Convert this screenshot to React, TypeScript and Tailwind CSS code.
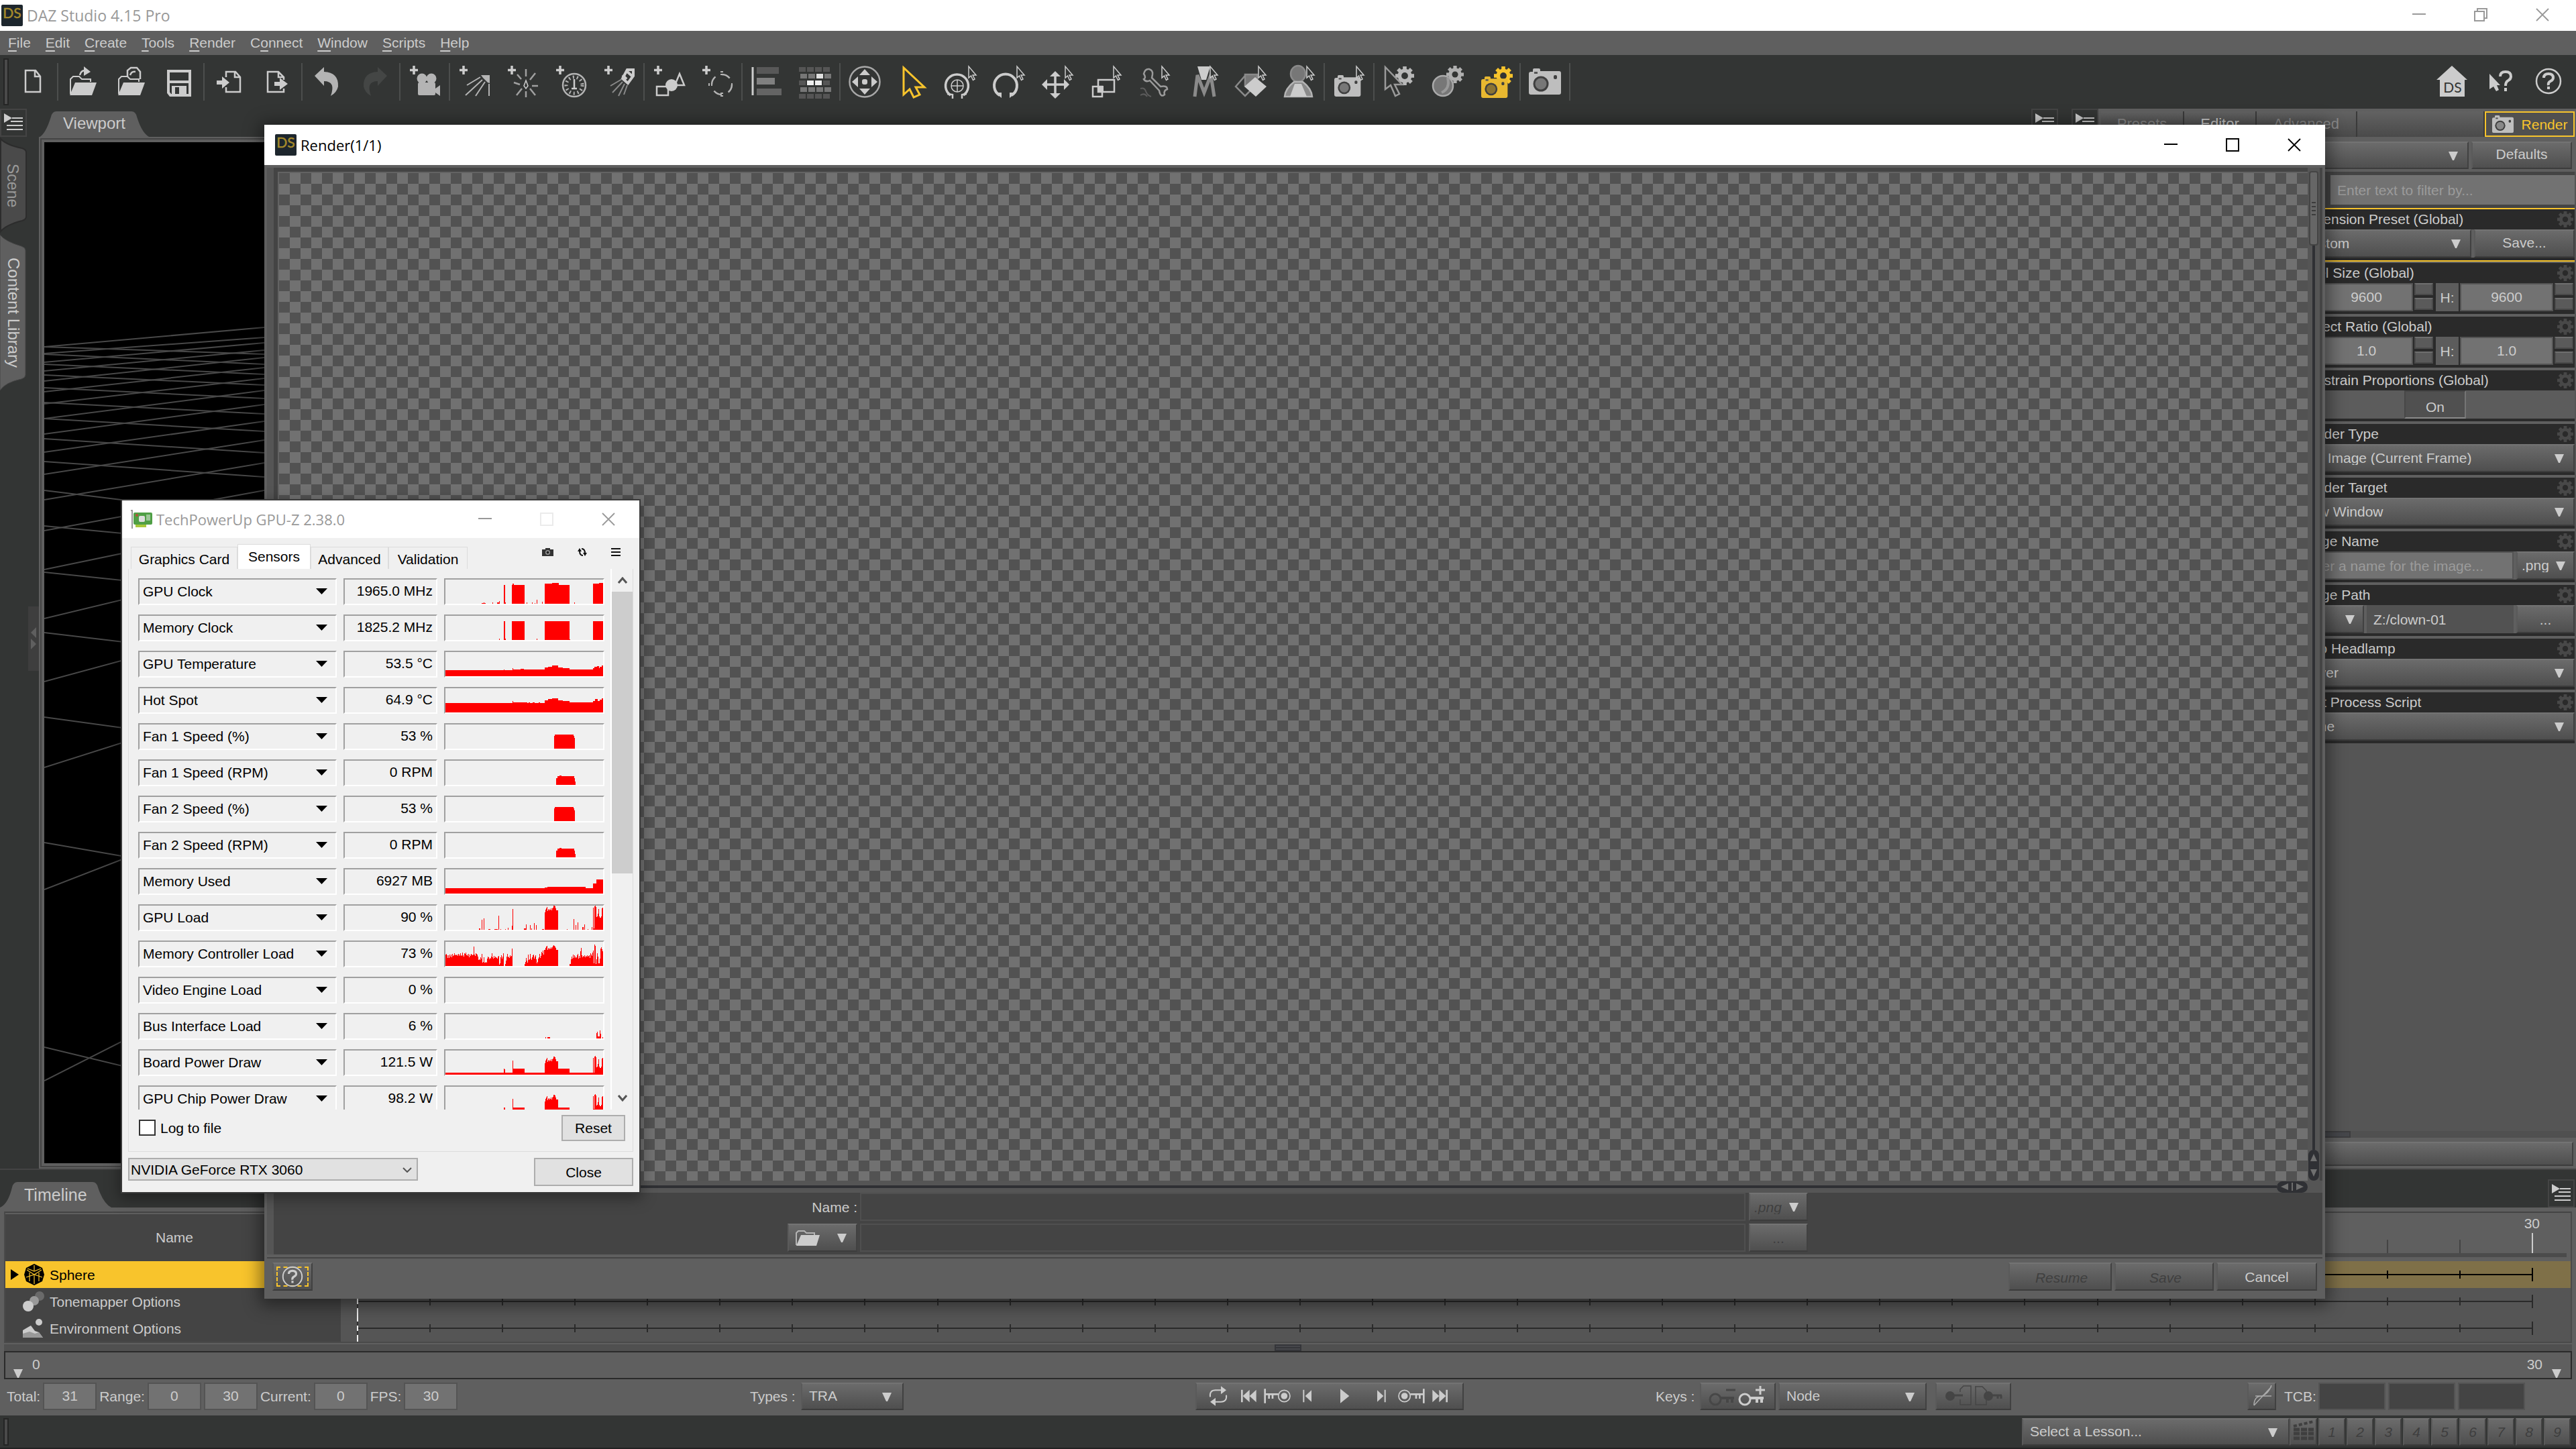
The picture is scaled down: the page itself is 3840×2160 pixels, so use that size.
import type { ReactNode } from "react";

const btn = "border-2 border-t-[#737373] border-l-[#5a5a5a] border-r-[#414141] border-b-[#3c3c3c] bg-linear-to-b from-[#6b6b6b] to-[#4f4f4f]";
const field = "border-2 border-[#545454] bg-[#727272] text-center text-[#cccccc] outline-none";

// ---------- small drawing helpers ----------

function Icon({ children, size = 48 }: { children: ReactNode; size?: number }) {
  return (
    <svg width={size} height={size} viewBox="0 0 48 48" fill="none" stroke="#cccccc" strokeWidth="2.5" className="shrink-0 overflow-visible">
      {children}
    </svg>
  );
}

const Plus = () => <path d="M8 0v13M2 6.500h12" strokeWidth="3.500" />;
const MiniCursor = () => (
  <path d="M35 1v17l3.500-3 3 6.500 2.500-1.500-3-6h5z" fill="#333534" strokeWidth="1.500" />
);

function Gear({ x, y, r, color, hole }: { x: number; y: number; r: number; color: string; hole: string }) {
  return (
    <g stroke="none">
      <g fill={color}>
        {[0, 45, 90, 135].map((a) => (
          <rect key={a} x={x - r / 5} y={y - r} width={(r * 2) / 5} height={r * 2} transform={`rotate(${a} ${x} ${y})`} />
        ))}
        <circle cx={x} cy={y} r={r * 0.75} />
      </g>
      <circle cx={x} cy={y} r={r * 0.35} fill={hole} />
    </g>
  );
}

function Camera({ x, y, s, color, lens }: { x: number; y: number; s: number; color: string; lens: string }) {
  return (
    <g transform={`translate(${x} ${y}) scale(${s})`} stroke="none">
      <path d="M3 5h3V2q0-2 2-2h7q2 0 2 2v2h28q3 0 3 3v29q0 3-3 3H3q-3 0-3-3V8q0-3 3-3z" fill={color} />
      <circle cx="18" cy="23" r="11.500" fill="#3f3f3f" />
      <circle cx="18" cy="23" r="8.500" fill={lens} />
      <rect x="37" y="10" width="5" height="6" rx="2" fill="#3f3f3f" />
      <rect x="8" y="5" width="5" height="3" fill="#555" />
    </g>
  );
}

function Caret({ className = "" }: { className?: string }) {
  return (
    <svg width="14" height="13" viewBox="0 0 14 13" className={`pointer-events-none shrink-0 ${className}`}>
      <path d="M0 0h14L8 13H6z" fill="#cccccc" />
    </svg>
  );
}

function DsLogo() {
  return (
    <svg width="32" height="32" viewBox="0 0 32 32" className="shrink-0">
      <rect width="32" height="32" rx="2" fill="#1d262d" />
      <text x="16" y="20" textAnchor="middle" fontSize="21" fontFamily="Lato, sans-serif" fill="#a58a2b" stroke="#a58a2b" strokeWidth="0.500">DS</text>
    </svg>
  );
}

function PaneMenu({ label }: { label: string }) {
  return (
    <button aria-label={label} className="h-[42px] w-[40px] shrink-0 border-2 border-[#444] pl-1">
      <svg width="28" height="28" viewBox="0 0 28 28" fill="#cccccc">
        <path d="M0 0l12 7L0 14zM12 6h16v2H12zM10 11h18v2H10zM4 17h24v2H4zM4 23h24v2H4z" />
      </svg>
    </button>
  );
}

type Mark = "min" | "max" | "restore" | "close";

function WindowButton({ mark, label, color }: { mark: Mark; label: string; color: string }) {
  return (
    <button aria-label={label} className="flex h-full w-[92px] items-center justify-center">
      <svg width="20" height="20" viewBox="0 0 20 20" fill="none" stroke={color} strokeWidth="2">
        {mark === "min" && <path d="M0 9h20" />}
        {mark === "max" && <path d="M1 1h18v18H1z" />}
        {mark === "restore" && <path d="M1 5h14v14H1zM5 5V1h14v14h-4" />}
        {mark === "close" && <path d="M1 1l18 18M19 1L1 19" strokeWidth="1.800" />}
      </svg>
    </button>
  );
}

// ---------- menu and toolbar ----------

const MENU: [string, string, string][] = [
  ["", "F", "ile"], ["", "E", "dit"], ["", "C", "reate"], ["", "T", "ools"], ["", "R", "ender"],
  ["C", "o", "nnect"], ["", "W", "indow"], ["", "S", "cripts"], ["", "H", "elp"],
];

const folder = (
  <>
    <path d="M6 42V20l4-4h9l4 4h13v4" strokeWidth="2" />
    <path d="M13 25h32l-7 19H5z" fill="#cccccc" stroke="none" />
  </>
);

const TOOLS: [string, ReactNode][][] = [
  [["New", <path d="M13 7h15l7 9v23H13zM27 7v9h8" />]],
  [
    ["Open", <>{folder}<path d="M20 14q2-8 9-7" /><path d="M26 1l10 8-10 6z" fill="#cccccc" stroke="none" /></>],
    ["Merge", <>{folder}<path d="M19 16V7l5-4h9l5 6v11M23 14q2-6 8-5" /></>],
    ["Save", <><path d="M8 8h32v36H11l-3-4z" strokeWidth="4" /><path d="M8 24h32" strokeWidth="4" /><path d="M13 30h22v14H13z" fill="#cccccc" stroke="none" /><path d="M18 32h6v10h-6z" fill="#333534" stroke="none" /></>],
  ],
  [
    ["Import", <><path d="M20 17V9h14l7 8v22H20v-7M33 9v8h8" /><path d="M6 22h8v-6l11 9-11 9v-6H6z" fill="#cccccc" stroke="none" /></>],
    ["Export", <><path d="M34 34v5H10V9h16l8 8v4M26 9v8h8" /><path d="M20 24h8v-6l12 9-12 9v-6h-8z" fill="#cccccc" stroke="none" /></>],
  ],
  [
    ["Undo", <path d="M6 15L20 2v7q22 1 21 22-2 9-11 14 8-22-10-22v7z" fill="#b4b4b4" stroke="none" />],
    ["Redo", <path d="M42 15L28 2v7Q6 10 7 31q2 9 11 14-8-22 10-22v7z" fill="#444645" stroke="none" />],
  ],
  [["New Camera", <><Plus /><g fill="#b4b4b4" stroke="none"><circle cx="20" cy="19" r="7.500" /><circle cx="34" cy="19" r="7.500" /><rect x="14" y="25" width="26" height="19" rx="2" /><path d="M40 34l7-5v16l-7-5z" /></g></>]],
  [
    ["New Distant Light", <><Plus /><path d="M34 14h13v12l-3-1-7-7z" fill="#b4b4b4" stroke="none" /><path d="M33 17L13 29M36 21L11 44M40 24L26 45M46 27V45" strokeWidth="2" stroke="#b4b4b4" /></>],
    ["New Point Light", <><Plus /><path d="M29 22l-3 8 3 4 3-4z" strokeWidth="1.500" /><path d="M29 16V5M29 38v9M35 21l8-10M38 30h9M35 34l8 10M23 34l-8 10M20 28l-9-3M22 20l-6-7" stroke="#a0a0a0" /></>],
    ["New Linear Point Light", <><Plus /><circle cx="29" cy="29" r="17" stroke="#b4b4b4" /><circle cx="29" cy="29" r="12" strokeDasharray="2 4" stroke="#b4b4b4" strokeWidth="5" /><path d="M29 20v14M25 34h8" /></>],
    ["New Spotlight", <><Plus /><path d="M29 14l6 6M36 6l9 0v9l-8 11-8-7zM35 8l8 7" strokeWidth="4" /><path d="M28 20L11 30M29 24L14 40M32 27l-9 18M36 29l-5 14" stroke="#8a8a8a" strokeWidth="2" /></>],
  ],
  [
    ["New Primitive", <><Plus /><path d="M40 12l7 17H33z" /><circle cx="28" cy="29" r="9" fill="#cccccc" stroke="none" /><path d="M6 31h17v13H6z" /></>],
    ["New Null", <><Plus /><circle cx="31" cy="28" r="15" strokeDasharray="13 10.500" stroke="#b4b4b4" /><path d="M31 8v8M31 40v7M11 28h6M45 28h4" strokeWidth="4" stroke="#b4b4b4" strokeDasharray="2 2" /></>],
  ],
  [
    ["Align", <><path d="M3 2v42" strokeWidth="3" /><g stroke="none"><rect x="9" y="2" width="33" height="10" fill="#585858" /><rect x="9" y="18" width="27" height="10" fill="#808080" /><rect x="9" y="34" width="37" height="10" fill="#646464" /></g></>],
    ["Grid", <g stroke="none">{[0, 1, 2, 3, 4].map((r) => [0, 1, 2, 3].map((c) => (
      <rect key={`${r}${c}`} x={c * 12 + (r % 2) * 2} y={2 + r * 10} width="10" height="7" fill={r === 2 ? (c === 1 || c === 2 ? "#eeeeee" : "#555") : r === 1 && c === 2 ? "#e0e0e0" : r % 4 === 0 ? "#555" : "#777"} />
    )))}</g>],
  ],
  [
    ["Universal", <><circle cx="24" cy="24" r="22.500" stroke="#a8a8a8" /><g fill="#cccccc" stroke="none"><path d="M24 5l8 9H16zM24 43l8-9H16zM5 24l9-8v16zM43 24l-9-8v16z" /><rect x="20" y="20" width="8" height="8" rx="3" /></g></>],
    ["Node Selection", <path d="M10 3v40l9-8 6 12 9-4-6-11h13z" stroke="#f8c42c" strokeWidth="3" />],
    ["Universal Manipulator", <><g transform="translate(-6 2)"><path d="M14 42a17 17 0 1 1 19 0" strokeWidth="3.500" /><path d="M9 40l8 1v6M38 40l-7 1v6" /><circle cx="24" cy="28" r="9" strokeWidth="1.500" /><path d="M24 19v18M15 28h18" strokeWidth="1.500" /></g><MiniCursor /></>],
    ["Rotate", <><g transform="translate(-6 2)"><path d="M15 42a17 17 0 1 1 18 0" strokeWidth="4" /><path d="M8 38h10v8zM40 38H30v8z" fill="#cccccc" stroke="none" /></g><MiniCursor /></>],
    ["Translate", <><path d="M20 12v33M4 28h34" strokeWidth="3.500" /><path d="M20 8l8 8H12zM20 49l8-8H12zM0 28l8-8v16zM41 28l-8-8v16z" fill="#cccccc" stroke="none" /><MiniCursor /></>],
    ["Scale", <><path d="M12 21h24v18H12z" /><path d="M4 31h14v15H4z" /><path d="M12 30h8v9h-8z" fill="#cccccc" stroke="none" /><MiniCursor /></>],
    ["Joint Editor", <><path d="M8 12q2-8 8-7 6 2 5 8l-1 5 13 13q10-2 10 4-6 2-4 8-6 5-8-6L17 22q-6 3-9-2 4-2 0-8z" stroke="#9a9a9a" /><path d="M3 34q6-2 8 4t8 8M3 44q6-4 10 2" stroke="#5c5c5c" strokeWidth="2" /><MiniCursor /></>],
    ["Weight Brush", <><path d="M12 46l4-32 10 26 10-26 5 32" stroke="#8a8a8a" strokeWidth="5" /><path d="M16 1h19l-6 20h-7z" fill="#cccccc" stroke="none" /><MiniCursor /></>],
    ["Surface Selection", <><path d="M1 31l14-16 14 16-14 14z" stroke="#8a8a8a" /><path d="M15 13h18v17H15z" fill="#777" stroke="#8a8a8a" /><path d="M14 31l16-14 17 14-16 15z" fill="#cccccc" stroke="none" /><MiniCursor /></>],
    ["Figure Tool", <><ellipse cx="22" cy="12" rx="11" ry="12" fill="#777" stroke="#8a8a8a" /><path d="M16 24h13q13 10 14 22H2q1-12 14-22z" fill="#8a8a8a" stroke="#b4b4b4" /><path d="M17 27h10l8 19H10z" fill="#cccccc" stroke="none" /><MiniCursor /></>],
  ],
  [["Spot Render", <><Camera x={2} y={14} s={0.82} color="#bebebe" lens="#777" /><MiniCursor /></>]],
  [
    ["Tool Settings", <><Gear x={33} y={15} r={14} color="#b8b8b8" hole="#333534" /><path d="M4 2v33l8-6 7 16 6-3-7-14h11z" fill="#333534" stroke="#9a9a9a" /></>],
    ["Draw Settings", <><Gear x={36} y={13} r={13} color="#b0b0b0" hole="#333534" /><circle cx="18" cy="30" r="15" fill="#777" stroke="#aaa" /><path d="M25 18q4 16-9 22" stroke="#999" strokeWidth="4" /></>],
    ["Render Settings", <><Gear x={36} y={15} r={14} color="#f8c42c" hole="#333534" /><Camera x={3} y={16} s={0.82} color="#e8b830" lens="#8a7334" /></>],
  ],
  [["Render", <Camera x={0} y={4} s={1} color="#bebebe" lens="#777" />]],
];

function Toolbar() {
  return (
    <div className="flex h-[80px] shrink-0 items-center">
      <div className="ml-[5px] h-[70px] w-[8px] border-2 border-[#252525] bg-[#4a4a4a]" />
      {TOOLS.map((group, i) => (
        <div key={i} className="flex items-center">
          {group.map(([name, art]) => (
            <button key={name} aria-label={name} className="flex w-[72px] justify-center">
              <Icon>{art}</Icon>
            </button>
          ))}
          <div className="h-14 w-[2px] bg-[#4c4e4d]" />
        </div>
      ))}
      <div className="mr-[5px] ml-auto flex">
        <button aria-label="Home" className="flex w-[72px] justify-center">
          <Icon>
            <path d="M24 0l23 21h-4v25H6V21H1z" fill="#cccccc" stroke="none" />
            <text x="25" y="40" textAnchor="middle" fontSize="21" fontFamily="Lato, sans-serif" fill="#333534" stroke="none">DS</text>
          </Icon>
        </button>
        <button aria-label="What's this" className="flex w-[72px] justify-center">
          <Icon>
            <path d="M8 12v23l6-4 4 7 4-2-3-7h5z" fill="#cccccc" stroke="none" />
            <path d="M24 16q0-7 8-7t8 7q0 4-4 6t-4 8M32 33v5" strokeWidth="4" />
          </Icon>
        </button>
        <button aria-label="Help" className="flex w-[72px] justify-center">
          <Icon>
            <circle cx="24" cy="23" r="18" />
            <path d="M17 18q0-6 7-6t7 6q0 3-4 5t-3 6M24 31v4" strokeWidth="4" />
          </Icon>
        </button>
      </div>
    </div>
  );
}

// ---------- left side ----------

function SideTabs() {
  return (
    <div className="flex w-[58px] shrink-0 flex-col">
      <PaneMenu label="Left pane menu" />
      <button className="relative flex h-[145px] w-[40px] items-center justify-center pr-1 text-[23px] text-[#999]">
        <svg viewBox="0 0 40 145" className="absolute inset-0 h-full w-full">
          <path d="M1 3q8 9 32 14 6 2 6 6v96q0 4-6 6-24 6-32 16z" fill="#4a4a4a" stroke="#2c2c2c" strokeWidth="2" />
        </svg>
        <span className="relative [writing-mode:vertical-rl]">Scene</span>
      </button>
      <button className="relative flex h-[234px] w-[40px] items-center justify-center text-2xl text-[#cccccc]">
        <svg viewBox="0 0 40 234" className="absolute inset-0 h-full w-full">
          <path d="M0 1q8 10 32 17 6 2 6 6v186q0 4-6 6-24 5-32 17z" fill="#5f5f5f" stroke="#444" />
        </svg>
        <span className="relative [writing-mode:vertical-rl]">Content Library</span>
      </button>
      <div className="mt-[321px] ml-auto flex h-24 w-4 items-center justify-center bg-[#3e3e3e]">
        <svg width="8" height="34" viewBox="0 0 8 34" fill="#5f5f5f">
          <path d="M8 0v16L0 8zM0 17v16l8-8z" />
        </svg>
      </div>
    </div>
  );
}

// floor grid, end points at the left and right edge of the visible strip
const FLOOR: [number, number][] = [
  [305, 276], [315, 291], [328, 299], [341, 310], [356, 321], [372, 336], [390, 352], [412, 370],
  [435, 391], [462, 416], [495, 444], [533, 478], [579, 519], [637, 569], [710, 631], [804, 715],
  [932, 828], [1114, 987], [1399, 1233],
  [305, 316], [316, 331], [331, 346], [347, 362], [366, 382], [388, 405], [412, 431], [442, 463],
  [476, 499], [519, 559], [572, 603], [641, 675], [731, 770], [857, 902], [1044, 1101], [1349, 1428],
];

function Viewport() {
  return (
    <div className="flex min-w-0 flex-1 flex-col">
      <div className="relative h-[42px]">
        <svg width="166" height="40" viewBox="0 0 166 40" className="absolute top-1 left-0">
          <path d="M0 39Q10 34 18 8q2-8 8-8h112q6 0 8 8 8 26 20 31z" fill="#5f5f5f" />
        </svg>
        <button className="absolute top-0 left-9 text-2xl leading-[44px] text-[#cccccc]">Viewport</button>
      </div>
      <div className="flex-1 border-2 border-[#5f5f5f] bg-[#444] p-[2px]">
        <div className="h-full border-4 border-[#5f5f5f] bg-black">
          <svg width="328" height="1519" viewBox="0 0 328 1519" stroke="#484848" strokeWidth="2">
            {FLOOR.map(([a, b], i) => (
              <line key={i} x1="0" y1={a} x2="328" y2={b} />
            ))}
          </svg>
        </div>
      </div>
    </div>
  );
}

// ---------- render settings ----------

function Drop({ value, className = "", label, caret = "right-4" }: { value: string; className?: string; label: string; caret?: string }) {
  return (
    <div className={`relative ${className}`}>
      <select aria-label={label} defaultValue={value} className={`h-full w-full appearance-none pb-[2px] pl-[10px] text-[#cccccc] outline-none ${btn}`}>
        <option>{value}</option>
      </select>
      <Caret className={`absolute top-[15px] ${caret}`} />
    </div>
  );
}

function Spinner() {
  return (
    <div className="flex w-[30px] shrink-0 flex-col gap-1 pr-[2px]">
      <button aria-label="Increase" className="h-[18px] border-2 border-[#4a4a4a] border-t-[#6f6f6f] bg-[#5a5a5a]" />
      <button aria-label="Decrease" className="h-[18px] border-2 border-[#4a4a4a] border-t-[#6f6f6f] bg-[#5a5a5a]" />
    </div>
  );
}

function Pair({ name, value }: { name: string; value: string }) {
  return (
    <div className="flex h-full gap-[2px] pl-1 text-[#cccccc]">
      {["W", "H"].map((axis) => (
        <label key={axis} className="flex min-w-0 flex-1 gap-[2px]">
          <span className="flex w-[34px] shrink-0 items-center justify-center bg-[#5c5c5c]">{axis}:</span>
          <input aria-label={`${name} ${axis}`} defaultValue={value} className={`w-0 min-w-0 flex-1 ${field}`} />
          <Spinner />
        </label>
      ))}
    </div>
  );
}

function Setting({ title, active, children }: { title: string; active?: boolean; children: ReactNode }) {
  return (
    <section className={active ? "border-y-2 border-[#f8c42c]" : "mb-1"}>
      <div className="bg-[#2a2a2a] pb-1">
        <div className="flex h-[30px] items-center justify-between pr-[2px] pl-2 text-[#cccccc]">
          <h3 className="pb-[2px]">{title}</h3>
          <svg width="24" height="24" viewBox="0 0 24 24"><Gear x={12} y={12} r={12} color="#484848" hole="#2a2a2a" /></svg>
        </div>
        <div className="h-[42px]">{children}</div>
      </div>
    </section>
  );
}

function RenderSettings() {
  const tab = "h-[38px] border-r-2 border-[#3a3a3a] bg-linear-to-b from-[#626262] to-[#4a4a4a] text-[22px]";
  return (
    <div className="flex w-[712px] shrink-0 flex-col bg-[#5f5f5f] text-[21px]">
      <div className="mt-1 flex h-[42px] pr-[2px] pl-1">
        <button className={`w-[124px] text-[#8a8a8a] ${tab}`}>Presets</button>
        <button className={`w-[108px] text-[#cccccc] ${tab}`}>Editor</button>
        <button className={`w-[150px] text-[#8a8a8a] ${tab}`}>Advanced</button>
        <div className={`flex-1 ${tab}`} />
        <button className="flex h-[38px] w-[134px] items-center justify-center gap-3 border-2 border-[#f8c42c] bg-[#505050] text-[21px] text-[#f8c42c]">
          <svg width="32" height="26" viewBox="0 0 48 39"><Camera x={0} y={0} s={1} color="#bebebe" lens="#888" /></svg>
          Render
        </button>
      </div>
      <div className="mt-[3px] flex h-[41px] gap-1 pr-[6px] pl-1">
        <Drop label="Engine" value="" className="flex-1" />
        <button className={`w-[150px] pb-1 text-[21px] text-[#cccccc] ${btn}`}>Defaults</button>
      </div>
      <div className="mt-1 flex min-h-0 flex-1">
        <div className="w-[290px] bg-[#444]" />
        <div className="min-w-0 flex-1 bg-[#555] pr-[2px]">
          <div className="flex h-[54px] items-center bg-[#444] pl-14">
            <input aria-label="Filter" placeholder="Enter text to filter by..." className="h-[44px] w-full bg-[#727272] pt-[2px] pl-[10px] outline-none placeholder:text-[#9b9b9b]" />
          </div>
          <div className="bg-[#5f5f5f]">
            <Setting title="Dimension Preset (Global)" active>
              <div className="flex h-full gap-1 bg-[#5f5f5f]">
                <Drop label="Dimension Preset" value="Custom" className="flex-1" />
                <button className={`w-[150px] pb-1 text-[#cccccc] ${btn}`}>Save...</button>
              </div>
            </Setting>
            <div className="h-[2px]" />
            <Setting title="Pixel Size (Global)"><Pair name="Pixel Size" value="9600" /></Setting>
            <Setting title="Aspect Ratio (Global)"><Pair name="Aspect Ratio" value="1.0" /></Setting>
            <Setting title="Constrain Proportions (Global)">
              <div className="flex h-full bg-[#5c5c5c] pl-[166px]">
                <button className="h-full w-[92px] border-2 border-[#474747] border-r-[#757575] border-b-[#8a8a8a] bg-[#505050] pt-[6px] text-[#cccccc]">On</button>
              </div>
            </Setting>
            <Setting title="Render Type"><Drop label="Render Type" value="Still Image (Current Frame)" className="h-full" /></Setting>
            <Setting title="Render Target"><Drop label="Render Target" value="New Window" className="h-full" /></Setting>
            <Setting title="Image Name">
              <div className="flex h-full gap-1 bg-[#5f5f5f]">
                <input aria-label="Image Name" placeholder="Enter a name for the image..." className="min-w-0 flex-1 border-2 border-[#545454] bg-[#727272] pt-[2px] pl-[10px] outline-none placeholder:text-[#9b9b9b]" />
                <div className="relative w-[87px]">
                  <select aria-label="Image Format" className={`h-full w-full appearance-none pb-[2px] pl-[6px] text-[#cccccc] ${btn}`}><option>.png</option></select>
                  <Caret className="absolute top-[15px] right-[14px]" />
                </div>
              </div>
            </Setting>
            <Setting title="Image Path">
              <div className="flex h-full gap-1 bg-[#5f5f5f]">
                <button aria-label="Choose folder" className={`flex w-[106px] items-center justify-end pr-3 ${btn}`}><Caret /></button>
                <div className="flex flex-1 items-center bg-[#525252] pl-[10px] text-[#cccccc]">Z:/clown-01</div>
                <button className={`w-[87px] text-[#cccccc] ${btn}`}>...</button>
              </div>
            </Setting>
            <Setting title="Auto Headlamp"><Drop label="Auto Headlamp" value="Never" className="h-full" /></Setting>
            <Setting title="Post Process Script"><Drop label="Post Process Script" value="None" className="h-full" /></Setting>
          </div>
        </div>
      </div>
      <div className="h-[10px] bg-[#505050] pl-[330px]">
        <div className="h-full w-[46px] border-2 border-[#3c3c3e] bg-[#46474b]" />
      </div>
      <div className={`mx-1 mt-[6px] mb-[4px] h-[36px] ${btn}`} />
    </div>
  );
}

// ---------- timeline ----------

function Track({ line }: { line: string }) {
  return (
    <div className="flex h-full items-center pr-[56px] pl-[24px]">
      {Array.from({ length: 30 }, (_, i) => (
        <div key={i} className={`flex h-3 flex-1 items-center border-l-2 ${line}`}>
          <div className={`w-full border-t-2 ${line}`} />
        </div>
      ))}
      <div className={`h-5 w-[2px] border-l-2 ${line}`} />
    </div>
  );
}

function NumberField({ label, values }: { label: string; values: string[] }) {
  return (
    <label className="flex items-center gap-1">
      <span>{label}</span>
      {values.map((v, i) => (
        <input key={i} aria-label={`${label} ${i + 1}`} defaultValue={v} className={`h-[41px] w-[80px] ${field}`} />
      ))}
    </label>
  );
}

const PLAYBACK: [string, string, ReactNode][] = [
  ["Loop", "w-[44px]", <><path d="M6 26q-2-15 12-15h15M42 22q2 15-12 15H15" strokeWidth="3" /><path d="M30 2l12 9-12 9zM18 28L6 37l12 9z" fill="#cccccc" stroke="none" /></>],
  ["First frame", "w-[44px]", <path d="M9 10v28h4V10zM28 10v28L13 24zM43 10v28L28 24z" fill="#cccccc" stroke="none" />],
  ["Previous key", "w-[46px]", <><path d="M-5 8v32M-3 20h28M4 20v10M12 20v10" strokeWidth="4" /><circle cx="38" cy="24" r="13" /><circle cx="38" cy="24" r="6" fill="#ccc" /></>],
  ["Previous frame", "w-[42px]", <path d="M14 10v28h3V10zM33 11v26L19 24z" fill="#cccccc" stroke="none" />],
  ["Play", "w-[68px]", <path d="M15 8v32l20-16z" fill="#cccccc" stroke="none" />],
  ["Next frame", "w-[42px]", <path d="M34 10v28h-3V10zM15 11v26l14-13z" fill="#cccccc" stroke="none" />],
  ["Next key", "w-[46px]", <><path d="M53 8v32M51 20H23M44 20v10M36 20v10" strokeWidth="4" /><circle cx="10" cy="24" r="13" /><circle cx="10" cy="24" r="6" fill="#ccc" /></>],
  ["Last frame", "w-[44px]", <path d="M39 10v28h-4V10zM20 10v28l15-14zM5 10v28l15-14z" fill="#cccccc" stroke="none" />],
];

function KeyArt({ x, color, sign }: { x: number; color: string; sign: string }) {
  return (
    <g stroke={color} fill="none" strokeWidth="3">
      <circle cx={x} cy="23" r="8" />
      <path d={`M${x + 8} 21h20M${x + 18} 22v6M${x + 25} 22v6`} strokeWidth="4" />
      <path d={sign} />
    </g>
  );
}

function Timeline() {
  return (
    <div className="shrink-0 text-[21px] text-[#cccccc]">
      <div className="relative flex h-[58px] justify-end border-t-2 border-[#444] pt-[14px] pr-[2px]">
        <svg width="166" height="38" viewBox="0 0 166 38" className="absolute bottom-0 left-0">
          <path d="M0 38Q12 33 18 8q2-8 8-8h112q6 0 8 8 8 24 20 30z" fill="#5f5f5f" />
        </svg>
        <button className="absolute bottom-0 left-9 text-[25px] leading-[38px]">Timeline</button>
        <PaneMenu label="Timeline pane menu" />
      </div>

      <div className="bg-[#5f5f5f] px-[6px] pt-[6px]">
        <div className="flex border-2 border-[#4a4a4a] border-t-[#444] pt-[2px]">
          <div className="w-[500px] shrink-0 bg-[#444]">
            <div className="flex h-[70px] items-center pb-[2px] pl-[224px]">Name</div>
            <ul>
              <li className="flex h-10 items-center bg-[#f8c42c] pl-2 text-black">
                <svg width="12" height="16" viewBox="0 0 12 16"><path d="M0 0l12 8-12 8z" /></svg>
                <svg width="30" height="32" viewBox="0 0 30 32" className="mx-2">
                  <path d="M15 0l12 6 3 10-3 10-12 6-12-6-3-10L3 6z" />
                  <path d="M15 2v8M15 17v13M4 9l11 7 11-7M3 20l12-4 12 4M5 7l10 4 10-4M8 26V13M22 26V13" stroke="#f8c42c" strokeWidth="1.200" fill="none" />
                </svg>
                Sphere
              </li>
              <li className="flex h-10 items-center pl-[26px]">
                <svg width="32" height="30" viewBox="0 0 32 30" className="mr-2"><circle cx="25" cy="7" r="7" fill="#6a6a6a" /><circle cx="17" cy="14" r="7" fill="#999" /><circle cx="8" cy="22" r="8" fill="#ccc" /></svg>
                Tonemapper Options
              </li>
              <li className="flex h-10 items-center pl-[26px]">
                <svg width="32" height="28" viewBox="0 0 32 28" className="mr-2"><circle cx="24" cy="5" r="5" fill="#ccc" /><path d="M0 17l5-3 7-4 6 8 6 2 6 8H0z" fill="#ccc" /><path d="M0 22l10-3 8 3 6-2 6 8H0z" fill="#999" /></svg>
                Environment Options
              </li>
            </ul>
          </div>
          <div className="relative min-w-0 flex-1 bg-[#555]">
            <div className="flex h-[70px] flex-col justify-end bg-[#5f5f5f] pb-[6px]">
              <div className="pr-[46px] text-right leading-[28px]">30</div>
              <div className="flex items-end pr-[56px] pl-[24px]">
                {Array.from({ length: 30 }, (_, i) => <div key={i} className="h-5 flex-1 border-l-2 border-[#444]" />)}
                <div className="h-[30px] w-[2px] bg-[#ccc]" />
              </div>
              <div className="mr-[6px] h-[6px] bg-[#4b4b4b]" />
            </div>
            <div className="h-10 bg-[#7f7048]"><Track line="border-black" /></div>
            <div className="h-10"><Track line="border-[#2a2a2a]" /></div>
            <div className="h-10"><Track line="border-[#2a2a2a]" /></div>
            {/* current frame */}
            <div className="absolute bottom-0 left-[24px] h-[190px] w-[2px] bg-[repeating-linear-gradient(to_top,#eee_0_10px,#333_10px_16px,#eee_16px_24px,#333_24px_30px,#eee_30px_40px)]" />
          </div>
        </div>
        <div className="flex h-[12px] justify-center border-t-2 border-[#5f5f5f] bg-[#505050]">
          <div className="w-[40px] border-2 border-[#35363a] bg-[#46474b]"><div className="mt-[2px] h-[2px] bg-[#35363a]" /></div>
        </div>
        <div className="relative flex h-[42px] items-center justify-between border-2 border-[#2a2a2a] pr-[42px] pb-1 pl-10">
          <span>0</span>
          <span>30</span>
          <Caret className="absolute bottom-0 left-3" />
          <Caret className="absolute right-[14px] bottom-0" />
        </div>
      </div>

      <div className="flex h-[54px] items-center bg-[#5f5f5f] pb-1 pl-[10px]">
        <div className="flex w-[1108px] gap-1">
          <NumberField label="Total:" values={["31"]} />
          <NumberField label="Range:" values={["0", "30"]} />
          <NumberField label="Current:" values={["0"]} />
          <NumberField label="FPS:" values={["30"]} />
        </div>
        <label className="flex items-center gap-1">
          <span className="w-[72px]">Types :</span>
          <Drop label="Types" value="TRA" caret="right-[18px]" className="h-[41px] w-[153px]" />
        </label>
        <div className={`mr-auto ml-[435px] flex h-[41px] w-[400px] items-center justify-center ${btn}`}>
          {PLAYBACK.map(([name, w, art]) => (
            <button key={name} aria-label={name} className={`flex justify-center ${w}`}>
              <Icon size={32}>{art}</Icon>
            </button>
          ))}
        </div>
        <div className="flex w-[1372px] items-center">
          <span className="w-[66px]">Keys :</span>
          <button aria-label="Add or remove key" className={`h-[41px] w-[113px] ${btn}`}>
            <svg width="100" height="36" viewBox="0 0 100 36" className="mx-auto">
              <KeyArt x={16} color="#474747" sign="M32 9h14" />
              <KeyArt x={60} color="#cccccc" sign="M83 3v13M76 9h14" />
            </svg>
          </button>
          <Drop label="Key scope" value="Node" caret="right-[18px]" className="mr-[13px] ml-1 h-[41px] w-[221px]" />
          <button aria-label="Copy keys" className={`h-[41px] w-[113px] ${btn}`}>
            <svg width="100" height="36" viewBox="0 0 100 36" fill="none" stroke="#454545" strokeWidth="2" className="mx-auto">
              <circle cx="15" cy="18" r="6" fill="#454545" /><path d="M20 17h14" strokeWidth="3" />
              <path d="M30 12V8l5-5h11v28H30v-8M52 4h11l6 6v3M69 24v7H53V4" strokeWidth="1.500" />
              <circle cx="72" cy="18" r="6" fill="#454545" /><path d="M78 17h14M86 17v5M91 17v5" strokeWidth="3" />
            </svg>
          </button>
          <button aria-label="Interpolation" className={`ml-auto h-[41px] w-[43px] ${btn}`}>
            <svg width="36" height="36" viewBox="0 0 36 36" fill="none" stroke="#aaa" strokeWidth="1.500"><path d="M8 32q0-14 12-14 10-4 14-16M8 32L34 4M10 18h24" /></svg>
          </button>
          <span className="mx-1 w-[55px] pl-2">TCB:</span>
          {[1, 2, 3].map((n) => (
            <input key={n} aria-label={`TCB ${n}`} className="mr-1 h-[41px] w-[100px] border-2 border-[#545454] bg-[#444]" />
          ))}
          <div className="w-[72px]" />
        </div>
      </div>
    </div>
  );
}

function StatusBar() {
  return (
    <div className="flex h-[50px] shrink-0 items-center border-b-2 border-[#222] pr-[8px] text-[21px]">
      <div className="ml-[5px] h-[41px] w-[8px] border-2 border-[#252525] bg-[#4a4a4a]" />
      <Drop label="Lesson" value="Select a Lesson..." caret="right-[18px]" className="ml-auto h-[41px] w-[399px]" />
      <button aria-label="Lesson clip" className={`mr-[2px] flex h-[41px] w-[41px] items-center justify-center ${btn}`}>
        <svg width="34" height="34" viewBox="0 0 34 34" fill="none" stroke="#3f3f3f" strokeWidth="4"><path d="M2 9L32 2" strokeDasharray="5 3" /><path d="M2 14h30M2 20h30M2 27h30" strokeDasharray="9 2" strokeWidth="5" /></svg>
      </button>
      <div className="flex gap-[2px]">
        {[1, 2, 3, 4, 5, 6, 7, 8, 9].map((n) => (
          <button key={n} disabled className={`h-[41px] w-[40px] text-[#3f3f3f] italic ${btn}`}>{n}</button>
        ))}
      </div>
    </div>
  );
}

// ---------- render window ----------

function RenderWindow() {
  const line = "h-[42px] min-w-0 flex-1 border-2 border-[#4f4f4f] bg-[#444] outline-none";
  return (
    <div className="absolute top-[186px] right-[374px] bottom-[224px] left-[394px] flex flex-col bg-[#5f5f5f] text-[21px] text-[#cccccc] shadow-[0_4px_24px_6px_rgba(0,0,0,0.45)]">
      <div className="flex h-[60px] shrink-0 items-center bg-white pl-4 font-['Open_Sans','Noto_Sans',sans-serif]">
        <DsLogo />
        <h2 className="ml-[6px] text-[22px] text-black">Render(1/1)</h2>
        <div className="ml-auto flex h-[54px]">
          <WindowButton mark="min" label="Minimize render" color="#000" />
          <WindowButton mark="max" label="Maximize render" color="#000" />
          <WindowButton mark="close" label="Close render" color="#000" />
        </div>
      </div>

      <div className="mt-1 flex min-h-0 flex-1 flex-col border-x-4 border-[#5f5f5f] bg-[#444]">
        <div className="flex min-h-0 flex-1 border-l-[10px] border-[#555]">
          <div className="mt-[6px] min-w-0 flex-1 pl-[6px]">
            <div className="h-full border-t-2 border-l-2 border-[#636363] bg-[conic-gradient(#717171_25%,#525252_0_50%,#717171_0_75%,#525252_0)] bg-[length:32px_32px]" />
          </div>
          <div className="mr-1 flex w-[18px] flex-col items-center bg-[#555] pt-[5px]">
            <div className="flex h-[111px] w-[14px] flex-col items-center justify-center gap-1 rounded-sm border-2 border-[#444] bg-[#666]">
              {[0, 1, 2, 3].map((n) => <div key={n} className="h-[2px] w-[6px] bg-[#3c3c3c]" />)}
            </div>
            <div className="w-1 flex-1 bg-[#2f3034]" />
            <div className="flex h-[46px] w-[16px] items-center justify-center rounded-full bg-[#2f3034]">
              <svg width="12" height="34" viewBox="0 0 12 34" fill="#6f6f6f"><path d="M6 0l5 11H1zM6 34l5-11H1z" /></svg>
            </div>
          </div>
        </div>
        <div className="flex h-[18px] items-center bg-[#555] pr-[22px] pl-[10px]">
          <div className="h-1 flex-1 bg-[#2f3034]" />
          <div className="flex h-[17px] w-[46px] items-center justify-center rounded-full bg-[#2f3034]">
            <svg width="34" height="12" viewBox="0 0 34 12" fill="#6f6f6f"><path d="M0 6l11-5v10zM34 6l-11-5v10zM16 0h2v12h-2z" /></svg>
          </div>
        </div>
        <div className="flex flex-col gap-1 border-l-[10px] border-[#555] pb-1">
          <div className="flex items-center pl-[766px]">
            <label htmlFor="render-name" className="w-[104px] text-right">Name :</label>
            <input id="render-name" className={`ml-1 ${line}`} />
            <div className="relative mr-[767px] ml-[5px] h-[42px] w-[88px]">
              <select aria-label="File type" disabled className={`h-full w-full appearance-none pl-[6px] text-[#3f3f3f] italic opacity-100 ${btn}`}><option>.png</option></select>
              <Caret className="absolute top-[15px] right-[14px]" />
            </div>
          </div>
          <div className="flex items-center pl-[766px]">
            <button aria-label="Folder" className={`flex h-[42px] w-[104px] items-center justify-between pr-[14px] pl-[10px] ${btn}`}>
              <svg width="36" height="23" viewBox="0 0 36 23"><path d="M1 22V4l3-3h9l3 3h12v4" fill="none" stroke="#b4b4b4" strokeWidth="2" /><path d="M8 7h28l-5 16H1z" fill="#ccc" /></svg>
              <Caret />
            </button>
            <input aria-label="Folder path" className={`ml-1 ${line}`} />
            <button disabled className={`mr-[767px] ml-[5px] h-[42px] w-[88px] text-[#3f3f3f] ${btn}`}>...</button>
          </div>
        </div>
      </div>

      <div className="mx-1 mt-1 h-[2px] bg-[#444]" />
      <div className="flex h-[60px] shrink-0 items-start gap-1 pt-[6px] pr-3 pl-3">
        <button aria-label="Render help" className={`mr-auto flex h-[42px] w-[60px] items-center justify-center ${btn}`}>
          <div className="flex h-[30px] w-[48px] items-center justify-center border-2 border-dashed border-[#f8c42c]">
            <Icon size={38}><circle cx="24" cy="24" r="18" /><path d="M17 19q0-6 7-6t7 6q0 3-4 5t-3 6M24 32v4" strokeWidth="4" /></Icon>
          </div>
        </button>
        <button disabled className={`h-[42px] w-[154px] pt-[2px] pl-1 text-[#3f3f3f] italic ${btn}`}>Resume</button>
        <button disabled className={`h-[42px] w-[148px] pt-[2px] pl-1 text-[#3f3f3f] italic ${btn}`}>Save</button>
        <button className={`h-[42px] w-[150px] text-[#cccccc] ${btn}`}>Cancel</button>
      </div>
    </div>
  );
}

// ---------- GPU-Z ----------

type Bar = [number, number, number]; // x, width, height

const run = (x: number, step: number, heights: number[]): Bar[] => heights.map((h, i) => [x + i * step, step, h]);

const BURST = [26, 30, 32, 34, 28, 30, 31, 29, 30, 32, 29, 32, 33, 36, 36, 35, 32, 29, 29, 29];
const TAIL = [33, 2, 35, 36, 34, 19, 20, 24, 31, 20, 18, 18, 20, 32, 33, 32];

const SENSORS: [string, string, Bar[]][] = [
  ["GPU Clock", "1965.0 MHz", [[56, 6, 1], [59, 1, 2], [72, 1, 2], [79, 4, 2], [82, 1, 4], [89, 2, 28], [91, 1, 2], [101, 19, 28], [102, 2, 30], [123, 1, 2], [131, 1, 2], [135, 1, 1], [138, 1, 6], [146, 1, 3], [150, 37, 28], [150, 21, 30], [161, 10, 31], [194, 1, 2], [222, 15, 30], [231, 6, 31]]],
  ["Memory Clock", "1825.2 MHz", [[82, 1, 2], [89, 2, 28], [91, 1, 2], [101, 19, 28], [138, 1, 2], [150, 37, 28], [187, 1, 1], [222, 15, 28]]],
  ["GPU Temperature", "53.5 °C", [[0, 237, 9], [89, 1, 10], [102, 135, 10], [102, 1, 12], [114, 5, 11], [150, 5, 13], [155, 6, 14], [161, 9, 16], [170, 7, 13], [177, 10, 12], [222, 15, 12], [224, 4, 14], [228, 3, 15], [232, 5, 14], [235, 2, 16]]],
  ["Hot Spot", "64.9 °C", [[0, 237, 14], [102, 22, 15], [102, 1, 17], [126, 2, 15], [132, 3, 15], [141, 2, 15], [150, 87, 15], [150, 5, 18], [155, 6, 20], [161, 9, 21], [170, 7, 18], [177, 10, 17], [222, 15, 17], [225, 4, 20], [232, 5, 19], [235, 2, 21]]],
  ["Fan 1 Speed (%)", "53 %", [[164, 31, 16], [164, 30, 19], [165, 28, 21]]],
  ["Fan 1 Speed (RPM)", "0 RPM", [[167, 29, 5], [167, 28, 10], [169, 25, 13], [172, 3, 14]]],
  ["Fan 2 Speed (%)", "53 %", [[164, 31, 16], [164, 30, 19], [165, 28, 21]]],
  ["Fan 2 Speed (RPM)", "0 RPM", [[167, 29, 5], [167, 28, 10], [169, 25, 13], [172, 3, 14]]],
  ["Memory Used", "6927 MB", [[0, 237, 8], [150, 4, 9], [154, 57, 10], [222, 15, 15], [227, 10, 21]]],
  ["GPU Load", "90 %", [[52, 2, 2], [56, 1, 15], [59, 1, 17], [66, 3, 1], [75, 5, 1], [81, 1, 21], [84, 1, 1], [91, 1, 1], [95, 1, 3], [101, 1, 6], [102, 1, 31], [119, 3, 2], [122, 1, 8], [128, 1, 7], [130, 1, 2], [134, 1, 10], [137, 1, 7], [146, 3, 1], ...run(150, 1, BURST), [183, 1, 1], [193, 1, 16], [196, 1, 7], [199, 1, 11], [206, 2, 4], [209, 1, 8], [214, 1, 1], [220, 1, 4], ...run(222, 1, TAIL)]],
  ["Memory Controller Load", "73 %", [
    ...run(0, 1, [15, 18, 17, 18, 16, 12, 16, 12, 17, 14, 17, 13, 18, 15, 16, 19, 16, 17, 16, 17, 15, 18, 17, 15, 19, 16, 15, 20, 16, 14, 19, 18, 20, 16, 17, 15, 18, 13, 17, 15, 18, 17, 16, 17, 29, 17, 15, 19, 18, 17]),
    ...run(50, 1, [14, 9, 10, 9, 13, 11, 18, 5, 6, 13, 5, 5, 6, 5, 11, 14, 13, 10, 12, 11, 14, 19, 13, 11, 15, 12, 14, 13, 12, 11, 14, 15, 2, 4, 13, 16, 11, 14, 19, 0, 0, 3, 8, 14, 18, 13, 14, 12, 16, 14, 15, 26]),
    ...run(120, 1, [3, 6, 12, 8, 5, 17, 9, 10, 18, 11, 9, 13, 16, 17, 11, 14, 16, 10, 4, 6, 11, 13, 18, 12, 15, 21, 19, 23, 17, 24]),
    ...run(150, 1, [24, 27, 29, 30, 24, 26, 27, 25, 26, 28, 26, 28, 30, 31, 30, 29, 27, 24, 24, 24]),
    ...run(187, 1, [3, 3, 10, 14, 11, 17, 12, 16, 14, 12, 13, 16, 18, 11, 15, 12, 22, 27, 16, 13, 15, 14, 16, 13, 15, 14, 16, 14, 15, 16, 12, 19, 17, 15, 20, 23, 4, 32, 30, 3, 10, 19, 14, 4, 4, 11, 26, 28, 25, 22]),
  ]],
  ["Video Engine Load", "0 %", []],
  ["Bus Interface Load", "6 %", [[151, 1, 2], [154, 4, 2], [227, 1, 8], [228, 1, 10], [229, 3, 3], [232, 1, 12], [233, 1, 7], [236, 1, 2]]],
  ["Board Power Draw", "121.5 W", [[0, 237, 3], [89, 1, 9], [90, 1, 8], [102, 1, 21], [102, 18, 9], ...run(150, 1, BURST.map((h) => h - 9)), [170, 17, 9], ...run(222, 1, TAIL.map((h) => Math.max(h - 8, 3)))]],
  ["GPU Chip Power Draw", "98.2 W", [[89, 2, 5], [102, 1, 18], [102, 18, 5], ...run(150, 1, BURST.map((h) => h - 12)), [170, 17, 5], ...run(222, 1, TAIL.map((h) => Math.max(h - 11, 3)))]],
];

const well = "h-10 border-2 border-t-[#a0a0a0] border-l-[#a0a0a0] border-r-white border-b-white";

function GpuZ() {
  const tab = "border border-b-0 border-[#dcdcdc]";
  const push = "border-2 border-[#adadad] bg-[#e1e1e1]";
  return (
    <div className="absolute top-[746px] left-[182px] flex w-[771px] flex-col bg-[#f0f0f0] pb-[9px] text-[21px] text-black shadow-[0_0_0_2px_#3a3a3a,0_6px_20px_4px_rgba(0,0,0,0.35)]">
      <div className="flex h-14 items-center bg-white pl-[13px] font-['Open_Sans','Noto_Sans',sans-serif]">
        <svg width="32" height="28" viewBox="0 0 32 28" className="shrink-0">
          <path d="M0 0h3v28H1V2H0z" fill="#999" />
          <rect x="4" y="4" width="28" height="18" rx="2" fill="#4f9f45" />
          <path d="M7 22h16v4H7z" fill="#a8c83a" />
          <rect x="12" y="9" width="9" height="9" rx="2" fill="#ddd" />
          <rect x="23" y="7" width="6" height="9" fill="#9cc797" />
          <circle cx="9" cy="8" r="2" fill="#b5503a" />
        </svg>
        <h2 className="ml-[6px] text-[22px] text-[#999]">TechPowerUp GPU-Z 2.38.0</h2>
        <div className="ml-auto flex h-[54px]">
          <WindowButton mark="min" label="Minimize GPU-Z" color="#999" />
          <WindowButton mark="max" label="Maximize GPU-Z" color="#ebebeb" />
          <WindowButton mark="close" label="Close GPU-Z" color="#999" />
        </div>
      </div>

      <div className="flex h-[46px] items-end pl-[13px]">
        <button className={`h-[33px] w-[159px] pt-[2px] ${tab}`}>Graphics Card</button>
        <button className={`h-[37px] w-[109px] bg-white pb-[2px] ${tab}`}>Sensors</button>
        <button className={`h-[33px] w-[116px] pt-[2px] ${tab}`}>Advanced</button>
        <button className={`h-[33px] w-[118px] pt-[2px] ${tab}`}>Validation</button>
        <div className="mr-[28px] mb-[19px] ml-auto flex items-center gap-[36px]">
          <button aria-label="Screenshot">
            <svg width="17" height="12" viewBox="0 0 17 12"><path d="M0 2h5V0h7v2h5v10H0z" fill="#333" /><circle cx="8.500" cy="6.500" r="3.500" fill="#999" /><circle cx="8.500" cy="6.500" r="2" fill="#222" /></svg>
          </button>
          <button aria-label="Refresh">
            <svg width="14" height="12" viewBox="0 0 14 12" fill="none" stroke="#111" strokeWidth="2"><path d="M8 11Q3 11 3 4M6 1q5 0 5 7" /><path d="M0 5l3-5 3 5zM8 7h6l-3 5z" fill="#111" stroke="none" /></svg>
          </button>
          <button aria-label="Menu">
            <svg width="14" height="12" viewBox="0 0 14 12"><path d="M0 0h14v2H0zM0 5h14v2H0zM0 10h14v2H0z" fill="#111" /></svg>
          </button>
        </div>
      </div>

      <div className="mx-[9px] border border-t-0 border-[#dcdcdc]">
        <div className="flex h-[806px]">
          <div className="flex-1 overflow-hidden pt-[14px] pl-[14px]">
            <table className="border-collapse">
              <tbody>
                {SENSORS.map(([name, value, bars]) => (
                  <tr key={name} className="h-[54px] align-top">
                    <td className="w-[306px] p-0">
                      <button className={`flex w-[296px] items-center justify-between pr-3 pb-[2px] pl-[5px] ${well}`}>
                        {name}
                        <svg width="17" height="9" viewBox="0 0 17 9"><path d="M0 0h17L8.500 9z" /></svg>
                      </button>
                    </td>
                    <td className="w-[150px] p-0">
                      <div className={`w-[140px] pr-[5px] text-right leading-[34px] ${well}`}>{value}</div>
                    </td>
                    <td className="p-0">
                      <div className={`w-[239px] ${well}`}>
                        <svg width="235" height="36" viewBox="2 1 235 36" fill="#ff0000" shapeRendering="crispEdges">
                          {bars.map(([x, w, h], i) => <rect key={i} x={x} y={37 - h} width={w} height={h} />)}
                        </svg>
                      </div>
                    </td>
                  </tr>
                ))}
              </tbody>
            </table>
          </div>
          <div className="flex w-[33px] flex-col items-center border-l-2 border-white">
            <svg width="14" height="10" viewBox="0 0 14 10" fill="none" stroke="#555" strokeWidth="3" className="my-[12px] h-[10px]"><path d="M1 9l6-7 6 7" /></svg>
            <div className="h-[420px] w-full bg-[#cdcdcd]" />
            <svg width="14" height="10" viewBox="0 0 14 10" fill="none" stroke="#555" strokeWidth="3" className="mt-auto mb-[12px]"><path d="M1 1l6 7 6-7" /></svg>
          </div>
        </div>
        <div className="flex h-[62px] items-start justify-between pt-2 pr-[11px] pl-[15px]">
          <label className="flex h-10 items-center gap-[7px] pb-[2px]">
            <input type="checkbox" className="h-6 w-[25px] appearance-none border-2 border-[#333] bg-white" />
            <span>Log to file</span>
          </label>
          <button className={`h-[39px] w-[95px] ${push}`}>Reset</button>
        </div>
      </div>

      <div className="mt-[9px] flex items-start justify-between px-[9px]">
        <div className="relative">
          <select aria-label="Graphics card" className={`h-[34px] w-[432px] appearance-none pl-[2px] ${push}`}>
            <option>NVIDIA GeForce RTX 3060</option>
          </select>
          <svg width="14" height="8" viewBox="0 0 14 8" fill="none" stroke="#555" strokeWidth="2" className="pointer-events-none absolute top-[14px] right-[9px]"><path d="M1 1l6 6 6-6" /></svg>
        </div>
        <button className={`h-[42px] w-[148px] ${push}`}>Close</button>
      </div>
    </div>
  );
}

export default function App() {
  return (
    <div className="relative flex h-screen w-full flex-col overflow-hidden bg-[#333534] font-['Liberation_Sans',Arial,sans-serif] leading-none">
      <header className="flex h-[46px] shrink-0 items-center bg-white pl-[2px] font-['Open_Sans','Noto_Sans',sans-serif]">
        <DsLogo />
        <h1 className="ml-[6px] text-[23px] text-[#999]">DAZ Studio 4.15 Pro</h1>
        <div className="mr-1 ml-auto flex h-[44px] self-start">
          <WindowButton mark="min" label="Minimize" color="#999" />
          <WindowButton mark="restore" label="Restore" color="#999" />
          <WindowButton mark="close" label="Close" color="#999" />
        </div>
      </header>
      <nav className="flex h-9 shrink-0 items-center gap-[22px] bg-[#5f5f5f] pl-3 text-[21px] text-[#cccccc]">
        {MENU.map(([a, key, b]) => (
          <button key={a + key + b} className="pb-[2px]">
            {a}<span className="underline decoration-2 underline-offset-4">{key}</span>{b}
          </button>
        ))}
      </nav>
      <Toolbar />
      <div className="flex min-h-0 flex-1">
        <SideTabs />
        <Viewport />
        <div className="flex w-[100px] shrink-0 justify-between">
          <PaneMenu label="Viewport pane menu" />
          <PaneMenu label="Right pane menu" />
        </div>
        <RenderSettings />
      </div>
      <Timeline />
      <StatusBar />
      <RenderWindow />
      <GpuZ />
    </div>
  );
}
